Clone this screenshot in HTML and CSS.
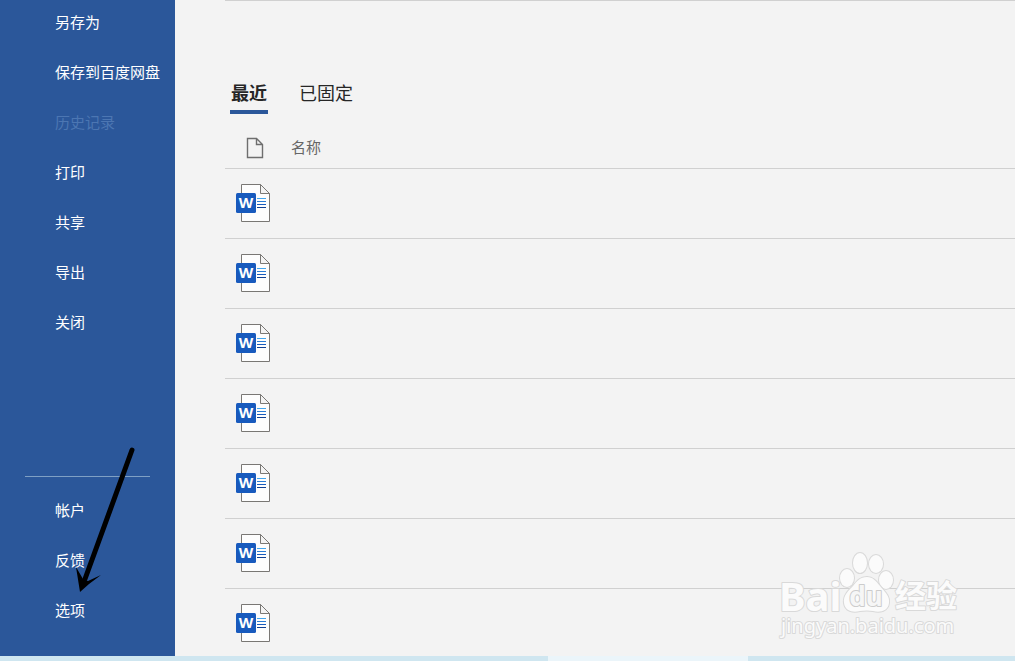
FILE: index.html
```html
<!DOCTYPE html>
<html lang="zh-CN">
<head>
  <meta charset="UTF-8">
  <meta name="viewport" content="width=device-width, initial-scale=1.0">
  <title>Word</title>
  <link rel="stylesheet" href="styles.css">
</head>
<body>

  <svg class="symbols" aria-hidden="true">
    <symbol id="wordDoc" viewBox="0 0 36 40">
      <path d="M6.500 1.500H25.500L34.500 10.500V38.500H6.500Z" fill="#fdfdfd" stroke="#797774"/>
      <path d="M25.500 1.500V10.500H34.500Z" fill="#f3f3f3" stroke="#797774"/>
      <rect x="1" y="10" width="20" height="20" rx="1.500" fill="#185abd"/>
      <path d="M22 15.500H31" stroke="#41a5ee"/>
      <path d="M22 18.500H31" stroke="#2b7cd3"/>
      <path d="M22 21.500H31" stroke="#185abd"/>
      <path d="M22 24.500H31" stroke="#103f91"/>
      <text class="word-letter" x="11" y="25">W</text>
    </symbol>
  </svg>

  <div class="backstage">
    <nav class="sidebar">
      <div class="menu">
        <button>另存为</button>
        <button>保存到百度网盘</button>
        <button disabled>历史记录</button>
        <button>打印</button>
        <button>共享</button>
        <button>导出</button>
        <button>关闭</button>
      </div>
      <div class="menu menu-bottom">
        <button>帐户</button>
        <button>反馈</button>
        <button>选项</button>
      </div>
    </nav>

    <main class="content">
      <div class="tabs">
        <button class="tab active">最近</button>
        <button class="tab">已固定</button>
      </div>
      <table class="files">
        <thead>
          <tr>
            <th class="icon-col">
              <svg class="page-icon" viewBox="0 0 18 22" role="img" aria-label="类型">
                <path d="M1.500 1.500H10.500L16.500 7.500V20.500H1.500Z M10.500 1.500V7.500H16.500" fill="none" stroke="#6e6e6e" stroke-width="1.400"/>
              </svg>
            </th>
            <th>名称</th>
          </tr>
        </thead>
        <tbody>
          <tr><td class="icon-col"><svg class="doc-icon"><use href="#wordDoc"/></svg></td><td></td></tr>
          <tr><td class="icon-col"><svg class="doc-icon"><use href="#wordDoc"/></svg></td><td></td></tr>
          <tr><td class="icon-col"><svg class="doc-icon"><use href="#wordDoc"/></svg></td><td></td></tr>
          <tr><td class="icon-col"><svg class="doc-icon"><use href="#wordDoc"/></svg></td><td></td></tr>
          <tr><td class="icon-col"><svg class="doc-icon"><use href="#wordDoc"/></svg></td><td></td></tr>
          <tr><td class="icon-col"><svg class="doc-icon"><use href="#wordDoc"/></svg></td><td></td></tr>
          <tr><td class="icon-col"><svg class="doc-icon"><use href="#wordDoc"/></svg></td><td></td></tr>
        </tbody>
      </table>
    </main>
  </div>

  <div class="taskbar"><span class="taskbar-active"></span></div>

  <!-- arrow pointing at 选项 -->
  <svg class="arrow" viewBox="0 0 64 150" aria-hidden="true">
    <path d="M60 7L13 136" stroke="#000" stroke-width="5" stroke-linecap="round"/>
    <path d="M8 149L4 124L11 136L16 138L29 132L17 141Z"/>
  </svg>

  <svg class="watermark" viewBox="0 0 200 100" aria-hidden="true">
    <g class="mark">
      <text class="mark-logo" x="9" y="67">Bai</text>
      <ellipse cx="77" cy="34" rx="7" ry="9"/>
      <ellipse cx="90" cy="19" rx="7" ry="10"/>
      <ellipse cx="106" cy="20" rx="7" ry="9"/>
      <ellipse cx="116" cy="36" rx="7" ry="9"/>
      <path d="M97 33C90 33 87 37 83 42C78 47 73 52 74 59C75 67 83 69 90 67Q97 66 103 67C110 69 118 67 119 59C120 52 115 48 110 42C106 37 103 33 97 33Z"/>
      <text class="mark-du" x="96" y="62">du</text>
      <text class="mark-name" x="125" y="63">经验</text>
      <text class="mark-url" x="11" y="89">jingyan.baidu.com</text>
    </g>
  </svg>

</body>
</html>
```
FILE: styles.css
```css
* {
  box-sizing: border-box;
}
body {
  margin: 0;
  height: 100vh;
  display: flex;
  flex-direction: column;
  position: relative;
  overflow: hidden;
  background-color: #f3f3f3;
  font-family: "Noto Sans CJK SC", sans-serif;
  color: #262626;
}
button {
  padding: 0;
  border: none;
  background: none;
  color: inherit;
  font-family: inherit;
  text-align: left;
  cursor: pointer;
}
.symbols {
  display: none;
}
.backstage {
  flex: 1;
  min-height: 0;
  display: flex;
  overflow: hidden;
}

/* left menu */
.sidebar {
  width: 175px;
  flex-shrink: 0;
  padding: 11px 0 35px;
  display: flex;
  flex-direction: column;
  justify-content: space-between;
  background-color: #2b579a;
  color: #ffffff;
}
.menu {
  display: flex;
  flex-direction: column;
  gap: 28px;
}
.menu button {
  padding-left: 55px;
  font-size: 15px;
  line-height: 22px;
  white-space: nowrap;
}
.menu button:disabled {
  color: #4c76b2;
  cursor: default;
}
.menu-bottom {
  margin: 0 25px;
  padding-top: 22px;
  border-top: 1px solid #7fa0c4;
}
.menu-bottom button {
  padding-left: 30px;
}

/* recent files */
.content {
  flex: 1;
  margin-left: 50px;
  border-top: 1px solid #d0d0d0;
}
.tabs {
  display: flex;
  gap: 30px;
  padding: 78px 0 0 5px;
}
.tab {
  height: 35px;
  padding: 0 1px 6px;
  border-bottom: 4px solid transparent;
  font-size: 18px;
  line-height: 24px;
}
.tab.active {
  border-color: #2b579a;
  font-weight: bold;
}
.files {
  width: 100%;
  border-collapse: separate;
  border-spacing: 0;
}
.files th,
.files td {
  padding: 0;
  border-bottom: 1px solid #d0d0d0;
}
.files th {
  height: 55px;
  padding-top: 12px;
  font-size: 15px;
  font-weight: normal;
  line-height: 22px;
  text-align: left;
  color: #666666;
}
.files td {
  height: 70px;
  padding-bottom: 2px;
}
.files .icon-col {
  width: 66px;
  padding-left: 10px;
}
.files th.icon-col {
  padding-top: 14px;
  padding-left: 21px;
}
.page-icon {
  display: block;
  width: 18px;
  height: 22px;
}
.doc-icon {
  display: block;
  width: 36px;
  height: 40px;
}
.word-letter {
  fill: #ffffff;
  font: bold 15px "Noto Sans", sans-serif;
  text-anchor: middle;
}

.taskbar {
  height: 5px;
  flex-shrink: 0;
  background-color: #cfe6f0;
}
.taskbar-active {
  display: block;
  width: 200px;
  height: 5px;
  margin-left: 54%;
  background-color: #ebf5fa;
}

.arrow {
  position: absolute;
  left: 72px;
  top: 443px;
  width: 64px;
  height: 150px;
  pointer-events: none;
}
.watermark {
  position: absolute;
  right: 45px;
  bottom: 17px;
  width: 200px;
  height: 100px;
  pointer-events: none;
}
.mark {
  fill: #fbfbfb;
  stroke: #d9d9d9;
  stroke-width: 2px;
  stroke-linejoin: round;
  paint-order: stroke;
}
.mark-logo {
  font: bold 40px "Noto Sans", sans-serif;
}
.mark-du {
  fill: #f6f6f6;
  stroke: #cccccc;
  font: bold 26px "Noto Sans", sans-serif;
  text-anchor: middle;
}
.mark-name {
  font: bold 31px "Noto Sans CJK SC", sans-serif;
}
.mark-url {
  font: 20px "Noto Sans", sans-serif;
}
```
